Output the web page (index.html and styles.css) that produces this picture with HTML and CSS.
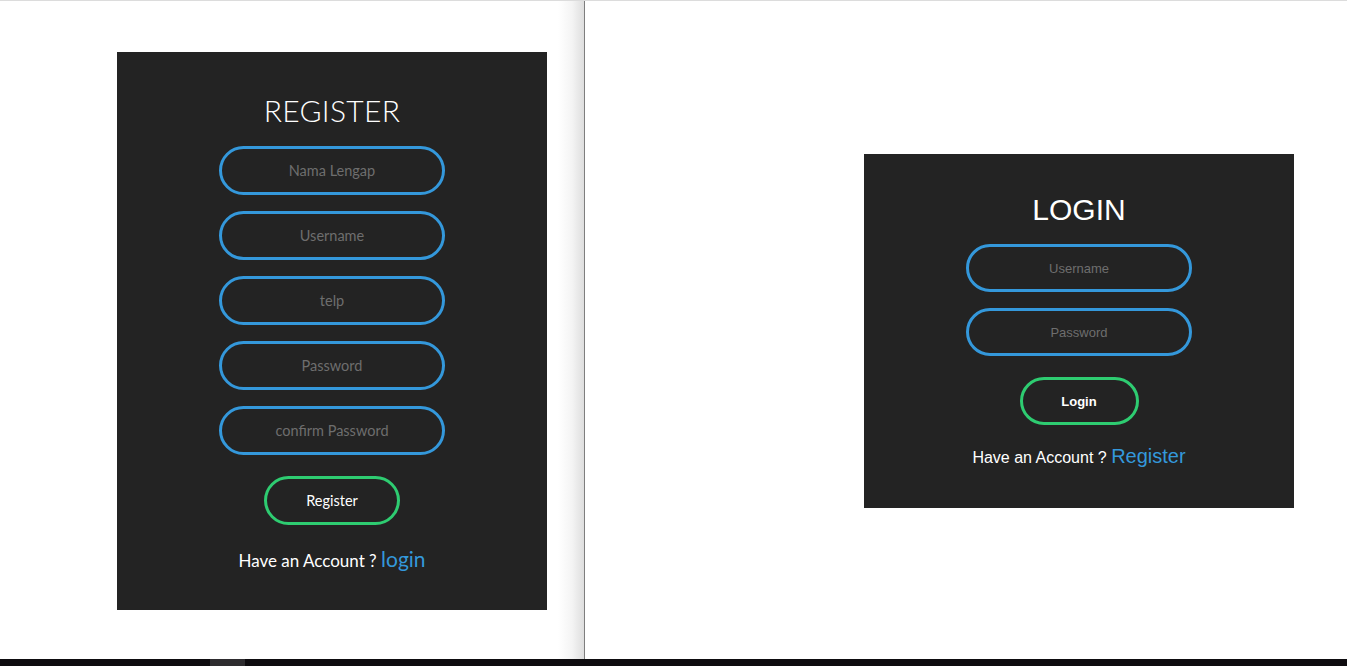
FILE: index.html
```html
<!DOCTYPE html>
<html lang="id">
<head>
<meta charset="utf-8">
<title>Register / Login</title>
<link rel="stylesheet" href="styles.css">
</head>
<body>
<div class="screen">
  <section class="pane pane-left">
    <form class="card card-register">
      <h1 class="title">REGISTER</h1>
      <input class="field" type="text" placeholder="Nama Lengap">
      <input class="field" type="text" placeholder="Username">
      <input class="field" type="text" placeholder="telp">
      <input class="field" type="password" placeholder="Password">
      <input class="field" type="password" placeholder="confirm Password">
      <button class="btn btn-register" type="button">Register</button>
      <p class="foot">Have an Account ? <a class="link" href="#">login</a></p>
    </form>
  </section>
  <div class="divider"></div>
  <section class="pane pane-right">
    <form class="card card-login">
      <h1 class="title">LOGIN</h1>
      <input class="field" type="text" placeholder="Username">
      <input class="field" type="password" placeholder="Password">
      <button class="btn btn-login" type="button">Login</button>
      <p class="foot">Have an Account ? <a class="link" href="#">Register</a></p>
    </form>
  </section>
</div>
<div class="taskbar"><span class="task-chip"></span></div>
</body>
</html>
```

FILE: styles.css
```css
* { box-sizing: border-box; }
html, body { margin: 0; padding: 0; }
body {
  background: #fff;
  border-top: 1px solid #dcdcdc;
  height: 666px;
  overflow: hidden;
}
.screen {
  display: flex;
  height: 658px;
}
.pane { height: 100%; }
.pane-left {
  width: 584px;
  padding: 51px 0 0 117px;
  background: linear-gradient(to right, #fff 0, #fff 558px, #f4f4f4 572px, #dedede 584px);
}
.divider {
  width: 1px;
  background: #7e7e7e;
}
.pane-right {
  flex: 1;
  padding: 153px 0 0 279px;
}
.card {
  width: 430px;
  background: #232323;
  display: flex;
  flex-direction: column;
  align-items: center;
}
.card-register {
  height: 558px;
  padding-top: 40px;
  font-family: "Lato", "Noto Sans", sans-serif;
}
.card-login {
  height: 354px;
  padding-top: 38px;
  font-family: "Liberation Sans", Arial, sans-serif;
}
.title {
  margin: 0 0 17px;
  font-size: 30px;
  line-height: 36px;
  font-weight: 400;
  color: #fff;
}
.card-register .title { font-weight: 300; letter-spacing: 0.3px; margin-bottom: 18px; }
.card-login .title { margin-bottom: 16px; }
.field {
  display: block;
  width: 226px;
  height: 48px;
  margin: 0 0 16px;
  padding: 0 10px;
  background: transparent;
  border: 3px solid #3498db;
  border-radius: 25px;
  text-align: center;
  color: #ddd;
  font-family: inherit;
  font-size: 13px;
  outline: none;
}
.card-register .field { height: 49px; font-size: 14.5px; }
.field::placeholder { color: #6e6e6e; }
.card-register .field:last-of-type { margin-bottom: 21px; }
.card-login .field:last-of-type { margin-bottom: 21px; }
.btn {
  display: block;
  height: 48px;
  background: transparent;
  border: 3px solid #2ecc71;
  border-radius: 25px;
  color: #fff;
  font-family: inherit;
  font-size: 13px;
  cursor: pointer;
}
.btn-register { width: 136px; height: 49px; margin-bottom: 22px; font-size: 14.5px; }
.btn-login { width: 119px; margin-bottom: 19px; font-weight: 700; }
.foot {
  margin: 0;
  line-height: 24px;
  font-size: 16px;
  color: #fff;
}
.card-register .foot { font-size: 17px; }
.link {
  color: #3498db;
  text-decoration: none;
  font-size: 20px;
}
.card-register .link { font-size: 21px; }
.taskbar {
  position: relative;
  height: 7px;
  background: #0e0c0f;
}
.task-chip {
  position: absolute;
  left: 210px;
  top: 0;
  width: 35px;
  height: 7px;
  background: #2e2c2f;
}
```
